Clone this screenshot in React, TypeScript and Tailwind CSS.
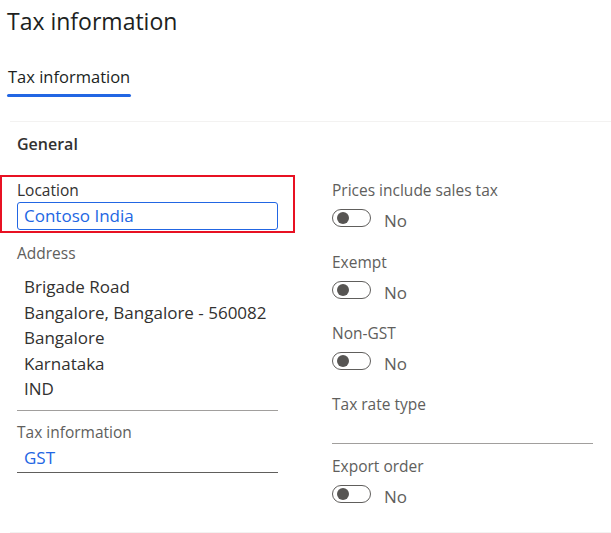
import React from "react";

function Toggle() {
  return (
    <div className="flex items-start h-[28px]">
      <div className="mt-[1px] w-[39px] h-[18px] rounded-full border border-[#605e5c] flex items-center px-[4px]">
        <span className="w-[12px] h-[12px] rounded-full bg-[#575553]" />
      </div>
      <span className="ml-[13px] mt-[2px] text-[17px] leading-[22px] text-[#605e5c]">No</span>
    </div>
  );
}

function ToggleField({ label }: { label: string }) {
  return (
    <div>
      <div className="text-[15.5px] leading-[20px] text-[#605e5c] font-medium">{label}</div>
      <div className="mt-[8px]">
        <Toggle />
      </div>
    </div>
  );
}

export default function App() {
  return (
    <div
      className="w-[611px] h-[533px] bg-white overflow-hidden text-[#323130]"
      style={{ fontFamily: '"Open Sans", "Noto Sans", sans-serif' }}
    >
      {/* Page title */}
      <h1 className="pl-[7px] pt-[7px] text-[23px] leading-[28px] text-[#201f1e]">Tax information</h1>

      {/* Tab */}
      <div className="pl-[7px] mt-[30px]">
        <div className="inline-flex flex-col">
          <span className="text-[16.5px] leading-[22px] text-[#201f1e] px-[1px]">Tax information</span>
          <span className="mt-[6px] h-[3px] rounded-full bg-[#2266e3]" />
        </div>
      </div>

      {/* Card */}
      <div className="ml-[10px] mt-[24px] border-t border-b border-[#f3f2f1] h-[412px]">
        <div className="pl-[7px] pt-[12px] text-[16px] leading-[20px] font-semibold text-[#323130]">General</div>

        <div className="flex mt-[26px]">
          {/* Left column */}
          <div className="ml-[7px] w-[261px]">
            <div className="relative">
              <span className="absolute left-[-17px] top-[-5px] w-[295px] h-[58px] border-2 border-[#e81123] pointer-events-none" />
              <div className="text-[15.5px] leading-[20px] text-[#323130] font-medium">Location</div>
              <div className="mt-[2px] h-[28px] border border-[#2266e3] rounded-[3px] flex items-center px-[6px] text-[17px] text-[#2266e3]">
                Contoso India
              </div>
            </div>

            <div className="mt-[13px] text-[15.5px] leading-[20px] text-[#605e5c] font-medium">Address</div>
            <div className="mt-[11px] pl-[7px] text-[17px] leading-[25.5px] text-[#323130]">
              <div>Brigade Road</div>
              <div>Bangalore, Bangalore - 560082</div>
              <div>Bangalore</div>
              <div>Karnataka</div>
              <div>IND</div>
            </div>
            <div className="mt-[8px] h-[1px] bg-[#a19f9d]" />

            <div className="mt-[11px] text-[15.5px] leading-[20px] text-[#605e5c] font-medium">Tax information</div>
            <div className="mt-[5px] pl-[7px] text-[17px] leading-[22px] text-[#2266e3]">GST</div>
            <div className="mt-[3px] h-[1px] bg-[#605e5c]" />
          </div>

          {/* Right column */}
          <div className="ml-[54px] w-[261px]">
            <ToggleField label="Prices include sales tax" />
            <div className="mt-[16px]">
              <ToggleField label="Exempt" />
            </div>
            <div className="mt-[15px]">
              <ToggleField label="Non-GST" />
            </div>
            <div className="mt-[15px] text-[15.5px] leading-[20px] text-[#605e5c] font-medium">Tax rate type</div>
            <div className="mt-[29px] h-[1px] bg-[#a19f9d]" />
            <div className="mt-[12px]">
              <ToggleField label="Export order" />
            </div>
          </div>
        </div>
      </div>
    </div>
  );
}
